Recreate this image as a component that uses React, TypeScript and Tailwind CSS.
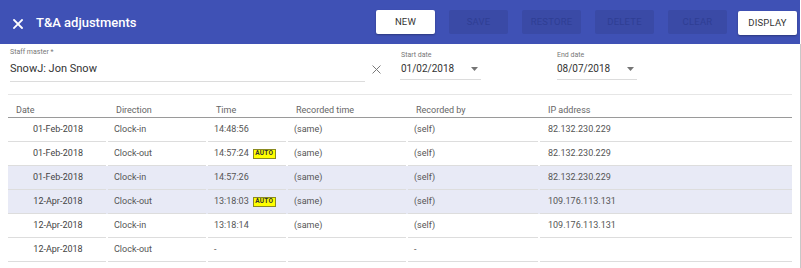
import React from 'react';

type Row = {
  date: string;
  direction: string;
  time: string;
  auto?: boolean;
  recordedTime: string;
  recordedBy: string;
  ip: string;
  selected?: boolean;
};

const ROWS: Row[] = [
  { date: '01-Feb-2018', direction: 'Clock-in', time: '14:48:56', recordedTime: '(same)', recordedBy: '(self)', ip: '82.132.230.229' },
  { date: '01-Feb-2018', direction: 'Clock-out', time: '14:57:24', auto: true, recordedTime: '(same)', recordedBy: '(self)', ip: '82.132.230.229' },
  { date: '01-Feb-2018', direction: 'Clock-in', time: '14:57:26', recordedTime: '(same)', recordedBy: '(self)', ip: '82.132.230.229', selected: true },
  { date: '12-Apr-2018', direction: 'Clock-out', time: '13:18:03', auto: true, recordedTime: '(same)', recordedBy: '(self)', ip: '109.176.113.131', selected: true },
  { date: '12-Apr-2018', direction: 'Clock-in', time: '13:18:14', recordedTime: '(same)', recordedBy: '(self)', ip: '109.176.113.131' },
  { date: '12-Apr-2018', direction: 'Clock-out', time: '-', recordedTime: '', recordedBy: '-', ip: '' },
];

const CloseIcon = ({ size, stroke, color }: { size: number; stroke: number; color: string }) => (
  <svg width={size} height={size} viewBox="0 0 10 10" fill="none">
    <path d="M1 1 L9 9 M9 1 L1 9" stroke={color} strokeWidth={stroke} strokeLinecap="square" />
  </svg>
);

const Caret = () => (
  <svg width="7" height="4" viewBox="0 0 7 4">
    <path d="M0 0 L7 0 L3.5 4 Z" fill="#757575" />
  </svg>
);

const ToolButton = ({ label, disabled }: { label: string; disabled?: boolean }) => (
  <button
    className={`h-[24px] w-[59px] rounded-[2px] text-[9.5px] tracking-[0.2px] uppercase ${
      disabled ? 'bg-[#3a4aa6] text-[#2f3e94]' : 'bg-white text-[#333] shadow-[0_1px_2px_rgba(0,0,0,0.3)]'
    }`}
  >
    {label}
  </button>
);

const cols = 'grid grid-cols-[100px_100px_80px_120px_132px_252px]';

export default function App() {
  return (
    <div className="w-[801px] h-[268px] bg-white overflow-hidden font-['Roboto',_'Liberation_Sans',_sans-serif]">
      {/* barra de título */}
      <div className="w-[800px] h-[44px] bg-[#3f51b5] flex items-center">
        <div className="ml-[13px] mt-[3px]">
          <CloseIcon size={10} stroke={1.8} color="#ffffff" />
        </div>
        <span className="ml-[13px] mt-[2px] text-[13px] font-medium text-white">T&amp;A adjustments</span>
        <div className="ml-auto flex items-center pr-[3px]">
          <div className="flex gap-[14px]">
            <ToolButton label="New" />
            <ToolButton label="Save" disabled />
            <ToolButton label="Restore" disabled />
            <ToolButton label="Delete" disabled />
            <ToolButton label="Clear" disabled />
          </div>
          <div className="ml-[11px]">
            <ToolButton label="Display" />
          </div>
        </div>
      </div>

      <div className="border-r border-[#c8c8c8] h-[224px]">
        {/* filtros */}
        <div className="flex items-start pl-[10px] h-[50px]">
          <div className="w-[355px] pt-[3px]">
            <div className="text-[7px] text-[#777] leading-[10px]">Staff master *</div>
            <div className="text-[11px] text-[#333] leading-[14px] mt-[5px] pb-[5px] border-b border-[#dcdcdc]">SnowJ: Jon Snow</div>
          </div>
          <div className="ml-[7px] mt-[21px]">
            <CloseIcon size={9} stroke={1.1} color="#777" />
          </div>
          <div className="ml-[19px] w-[81px] pt-[6px]">
            <div className="text-[7px] text-[#777] leading-[10px] pl-[1px]">Start date</div>
            <div className="flex items-center justify-between text-[10px] text-[#333] leading-[14px] mt-[2px] pb-[3px] pl-[1px] pr-[3px] border-b border-[#dcdcdc]">
              <span>01/02/2018</span>
              <Caret />
            </div>
          </div>
          <div className="ml-[76px] w-[80px] pt-[6px]">
            <div className="text-[7px] text-[#777] leading-[10px]">End date</div>
            <div className="flex items-center justify-between text-[10px] text-[#333] leading-[14px] mt-[2px] pb-[3px] pr-[3px] border-b border-[#dcdcdc]">
              <span>08/07/2018</span>
              <Caret />
            </div>
          </div>
        </div>

        <div className="ml-[8px] w-[784px] border-t border-[#e6e6e6]" />

        {/* tabela */}
        <div className="ml-[8px] w-[784px] mt-[6px] text-[9px] text-[#555]">
          <div className={`${cols} h-[17px] items-center pt-[3px] border-b border-[#9a9a9a] text-[#666]`}>
            <div className="pl-[8px]">Date</div>
            <div className="pl-[8px]">Direction</div>
            <div className="pl-[8px]">Time</div>
            <div className="pl-[8px]">Recorded time</div>
            <div className="pl-[8px]">Recorded by</div>
            <div className="pl-[8px]">IP address</div>
          </div>
          {ROWS.map((r, i) => (
            <div key={i} className={`${cols} h-[24px] ${r.selected ? 'bg-[#e8eaf6]' : ''}`}>
              <div className="mr-[2px] border-b border-[#dddddd] flex items-center justify-center pl-[2px] text-[#444]">{r.date}</div>
              <div className="mr-[2px] border-b border-[#dddddd] flex items-center pl-[6px]">{r.direction}</div>
              <div className="mr-[2px] border-b border-[#dddddd] flex items-center pl-[6px]">
                <span>{r.time}</span>
                {r.auto && (
                  <span className="ml-[4px] h-[10px] w-[23px] flex items-center justify-center bg-[#ffff00] border border-[#8a8a20] text-[6.5px] font-bold text-[#333] leading-none tracking-[0.2px]">
                    AUTO
                  </span>
                )}
              </div>
              <div className="mr-[2px] border-b border-[#dddddd] flex items-center pl-[6px]">{r.recordedTime}</div>
              <div className="mr-[2px] border-b border-[#dddddd] flex items-center pl-[6px]">{r.recordedBy}</div>
              <div className="border-b border-[#dddddd] flex items-center pl-[8px]">{r.ip}</div>
            </div>
          ))}
        </div>
      </div>
    </div>
  );
}
